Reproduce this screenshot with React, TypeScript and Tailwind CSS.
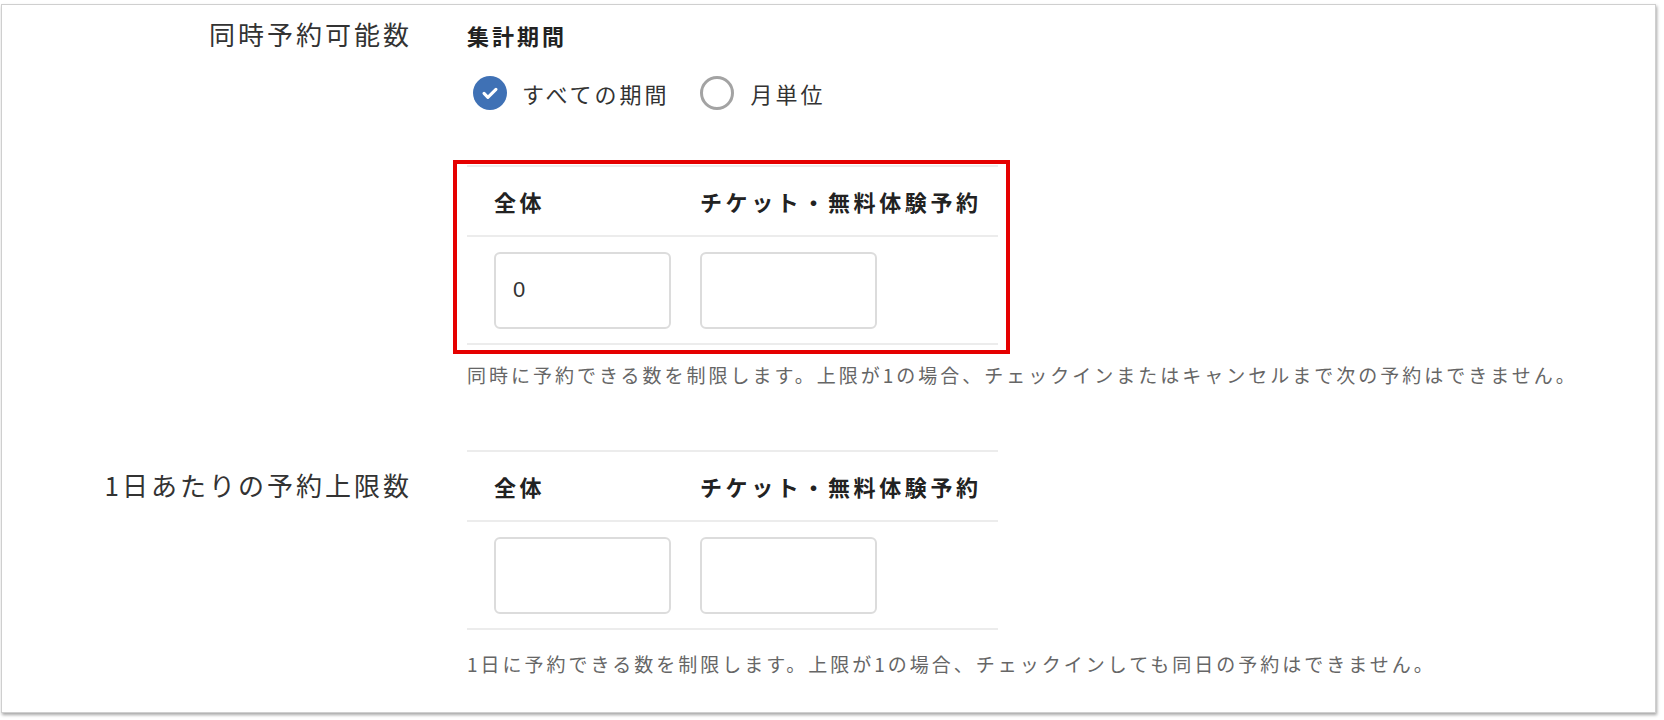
import React from "react"

const jp = "font-['Noto_Sans_CJK_JP','Noto_Sans',sans-serif]"

type LimitTableProps = {
  total?: string
  highlighted?: boolean
}

function LimitTable({ total = "", highlighted = false }: LimitTableProps) {
  return (
    <div className="relative w-[531px]">
      <div className="border-y-2 border-[#ececec]">
        {/* header */}
        <div className="flex h-[68px] items-center text-[22px] font-bold tracking-[3.6px] text-[#222]">
          <div className="w-[233px] pl-[27px]">全体</div>
          <div className="flex-1">チケット・無料体験予約</div>
        </div>
        {/* inputs */}
        <div className="flex h-[108px] items-center border-t-2 border-[#ececec]">
          <div className="w-[233px] pl-[27px]">
            <input
              readOnly
              value={total}
              className="h-[77px] w-[177px] rounded-[6px] border-2 border-[#dcdcdc] bg-white px-[17px] font-['Liberation_Sans',sans-serif] text-[22px] text-[#333] outline-none"
            />
          </div>
          <div className="flex-1">
            <input
              readOnly
              value=""
              className="h-[77px] w-[177px] rounded-[6px] border-2 border-[#dcdcdc] bg-white outline-none"
            />
          </div>
        </div>
      </div>
      {/* annotation frame */}
      {highlighted && (
        <div className="pointer-events-none absolute -top-[5px] -bottom-[9px] -left-[14px] -right-[12px] border-4 border-[#e50000]" />
      )}
    </div>
  )
}

export default function App() {
  return (
    <div className={`min-h-[720px] bg-white pt-[4px] pl-[1px] ${jp}`}>
      <div className="h-[709px] w-[1655px] border border-[#cfcfcf] bg-white pt-[16px] shadow-[1px_2px_3px_rgba(0,0,0,0.35)]">
        {/* 同時予約可能数 */}
        <div className="flex">
          <div className="w-[410px] text-right text-[26px] leading-[26px] tracking-[3px] text-[#333]">
            同時予約可能数
          </div>
          <div className="ml-[55px] flex flex-col">
            <div className="h-[28px] text-[22px] font-bold leading-[28px] tracking-[3px] text-[#222]">集計期間</div>
            <div className="mt-[27px] flex h-[34px] items-center text-[22px] tracking-[3px] text-[#333]">
              <span className="ml-[6px] flex h-[34px] w-[34px] items-center justify-center rounded-full bg-[#3f71b5]">
                <svg width="22" height="22" viewBox="0 0 24 24" fill="none">
                  <path d="M5.5 12.5l4.2 4.2L18.5 8" stroke="white" strokeWidth="3.4" strokeLinecap="round" strokeLinejoin="round" />
                </svg>
              </span>
              <span className="ml-[15px]">すべての期間</span>
              <span className="ml-[30px] h-[34px] w-[34px] rounded-full border-[3px] border-[#a3a3a3] bg-white" />
              <span className="ml-[17px]">月単位</span>
            </div>
            <div className="mt-[55px]">
              <LimitTable total="0" highlighted />
            </div>
            <p className="mt-[18px] text-[19px] leading-[24px] tracking-[3px] text-[#666]">
              同時に予約できる数を制限します。上限が1の場合、チェックインまたはキャンセルまで次の予約はできません。
            </p>
          </div>
        </div>

        {/* 1日あたりの予約上限数 */}
        <div className="mt-[63px] flex">
          <div className="mt-[22px] w-[410px] text-right text-[26px] leading-[26px] tracking-[3px] text-[#333]">
            1日あたりの予約上限数
          </div>
          <div className="ml-[55px] flex flex-col">
            <LimitTable />
            <p className="mt-[22px] text-[19px] leading-[24px] tracking-[3px] text-[#666]">
              1日に予約できる数を制限します。上限が1の場合、チェックインしても同日の予約はできません。
            </p>
          </div>
        </div>
      </div>
    </div>
  )
}
